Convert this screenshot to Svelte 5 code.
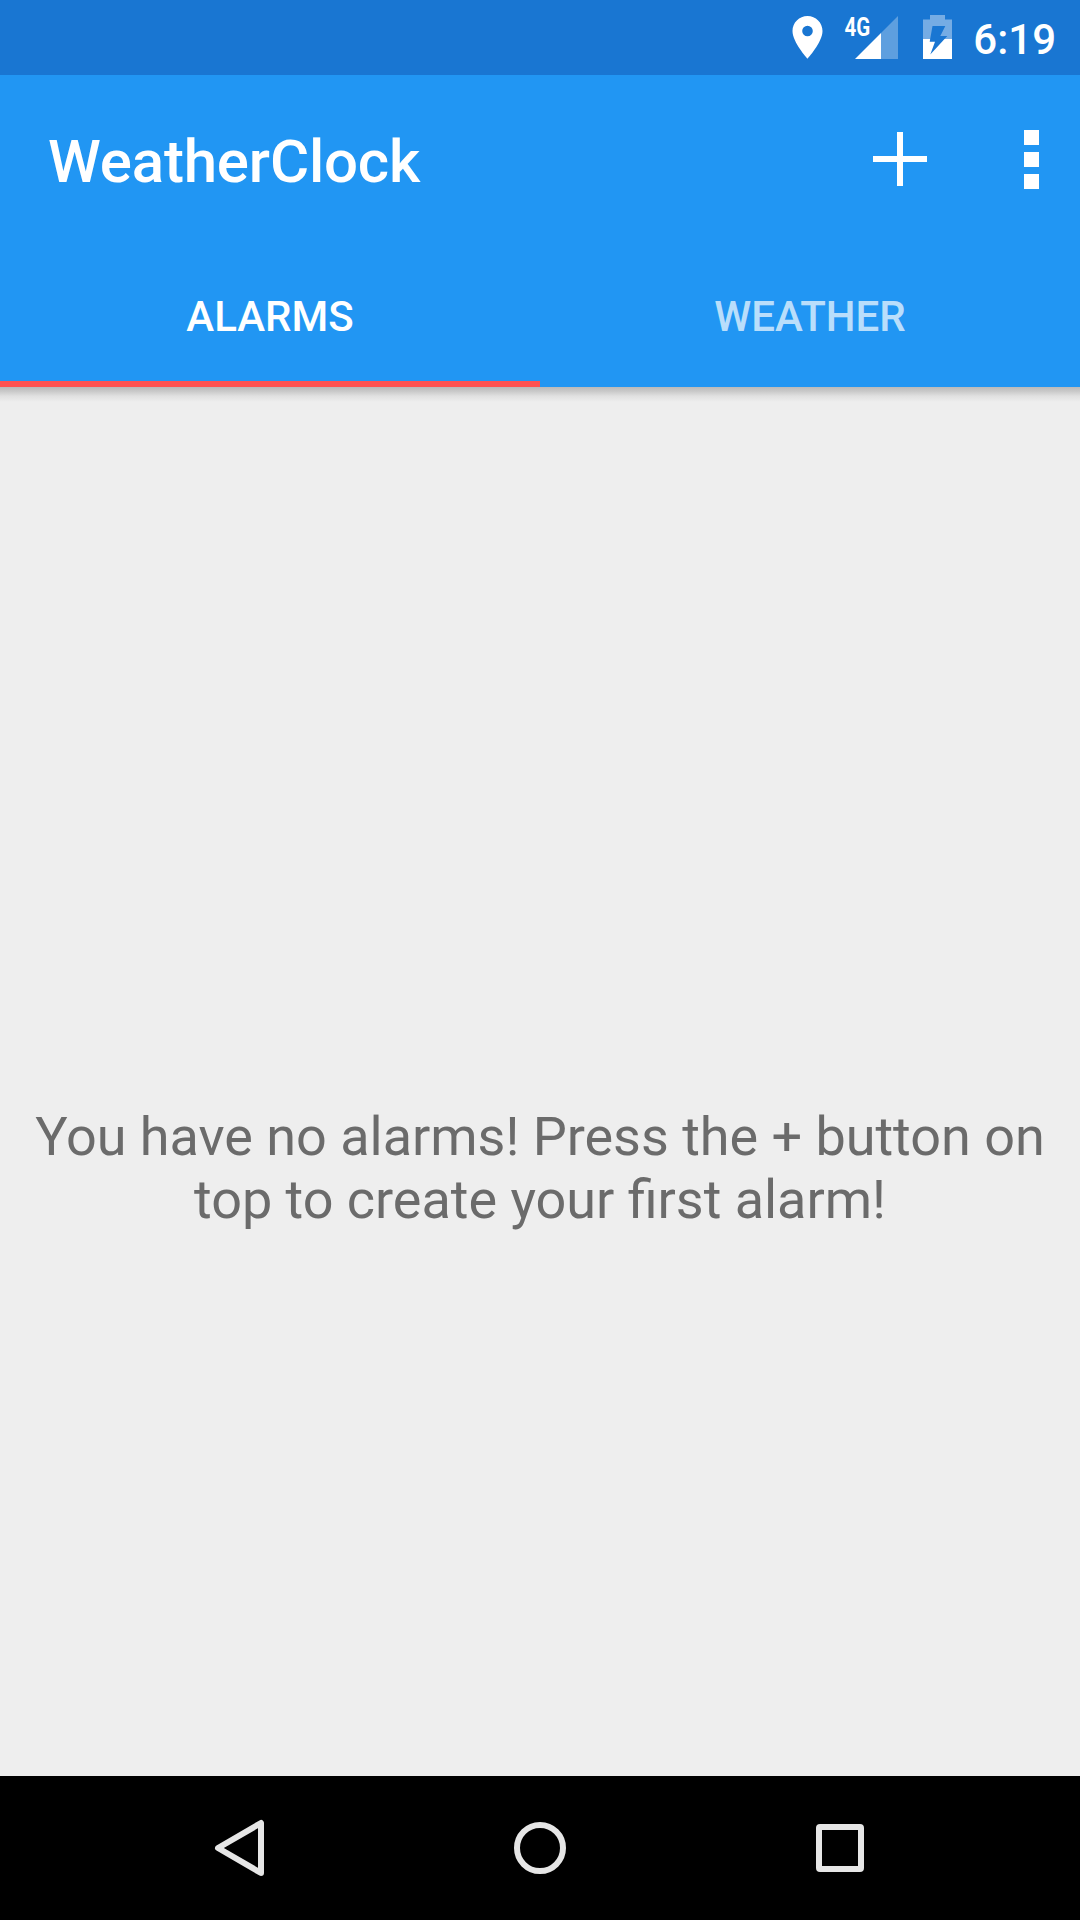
<script>
  const tabs = ['ALARMS', 'WEATHER'];
  let selected = $state(0);
</script>

<div class="screen">
  <header class="status">
    <svg class="status-icons" width="180" height="75" viewBox="782 0 180 75">
      <path fill="#fff" fill-rule="evenodd" d="M807.500 16C799.200 16 792.500 22.700 792.500 31C792.500 42.200 807.500 58.700 807.500 58.700S822.500 42.200 822.500 31C822.500 22.700 815.800 16 807.500 16ZM807.500 25.700a5.300 5.300 0 1 1 0 10.600a5.300 5.300 0 1 1 0-10.600Z"/>
      <path fill="#fff" fill-opacity=".3" d="M898 16V59H881V33Z"/>
      <path fill="#fff" d="M855 59L881 33V59Z"/>
      <text transform="translate(844.500 35.500) scale(.82 1)">4G</text>
      <path fill="#fff" fill-opacity=".4" d="M923 19.500H930V15H945V19.500H952V39H923Z"/>
      <path fill="#fff" d="M923 39H952V59H923Z"/>
      <path fill="#1976d2" d="M932.500 26H945.300L940.300 36H947.300L930.300 54.500L935 41.700H929.700Z"/>
    </svg>
    <time>6:19</time>
  </header>
  <section class="appbar">
    <div class="toolbar">
      <h1>WeatherClock</h1>
      <button aria-label="Add alarm"><svg width="54" height="54" viewBox="0 0 54 54"><path fill="#fff" d="M24 0H30V24H54V30H30V54H24V30H0V24H24Z"/></svg></button>
      <button class="more" aria-label="More options"><svg width="15" height="60" viewBox="0 0 15 60"><path fill="#fff" d="M0 1H15V16H0ZM0 23H15V38H0ZM0 45H15V60H0Z"/></svg></button>
    </div>
    <nav class="tabs">
      {#each tabs as tab, i}
        <button class:active={selected === i} onclick={() => (selected = i)}>{tab}</button>
      {/each}
    </nav>
  </section>
  <main><p>You have no alarms! Press the + button on<br />top to create your <span class="ligature">fi</span>rst alarm!</p></main>
  <footer class="navigation">
    <svg width="1080" height="144" viewBox="0 0 1080 144" fill="none" stroke="#e6e6e6" stroke-width="6" stroke-linejoin="round">
      <path d="M261 47V97L218 72Z"/><circle cx="540" cy="72" r="23"/><rect x="819" y="51" width="42" height="42" rx="1"/>
    </svg>
  </footer>
</div>

<style>
  :global(body) { margin: 0; }
  .screen { width: 1080px; height: 1920px; display: flex; flex-direction: column; background: #eee; font-family: Roboto, sans-serif; }
  .status { height: 75px; display: flex; justify-content: flex-end; align-items: center; background: #1976d2; color: #fff; padding-right: 24px; box-sizing: border-box; }
  .status-icons text { font: 700 25px Roboto, sans-serif; fill: #fff; }
  time { font-size: 42px; font-weight: 500; margin-left: 11px; line-height: 75px; padding-top: 4px; }
  .appbar { height: 312px; background: #2196f3; color: #fff; }
  .toolbar { height: 168px; display: flex; align-items: center; padding: 0 41px 0 48px; }
  h1 { font-size: 60px; font-weight: 500; line-height: 70px; letter-spacing: -.17px; margin: 6px auto 0 0; }
  button { border: 0; padding: 0; background: none; color: inherit; font: inherit; }
  .toolbar button { display: flex; }
  .toolbar .more { margin-left: 97px; }
  .tabs { display: grid; grid-template-columns: 1fr 1fr; height: 144px; }
  .tabs button { border-bottom: 6px solid transparent; padding-top: 8px; font-size: 42px; font-weight: 500; color: #ffffffb3; }
  .tabs button.active { color: #fff; border-color: #ff5252; }
  main { flex: 1; display: flex; align-items: center; justify-content: center; padding-top: 172px; background: linear-gradient(#bababa, #c8c8c8 4px, #e0e0e0 9px, #eee 15px); }
  p { margin: 0; font-size: 54px; line-height: 63px; letter-spacing: -.03px; color: #6b6b6b; text-align: center; white-space: nowrap; }
  .ligature { font-feature-settings: 'liga' 1, 'dlig' 1; }
  .navigation { height: 144px; background: #000; }
  .navigation svg { display: block; }
</style>
